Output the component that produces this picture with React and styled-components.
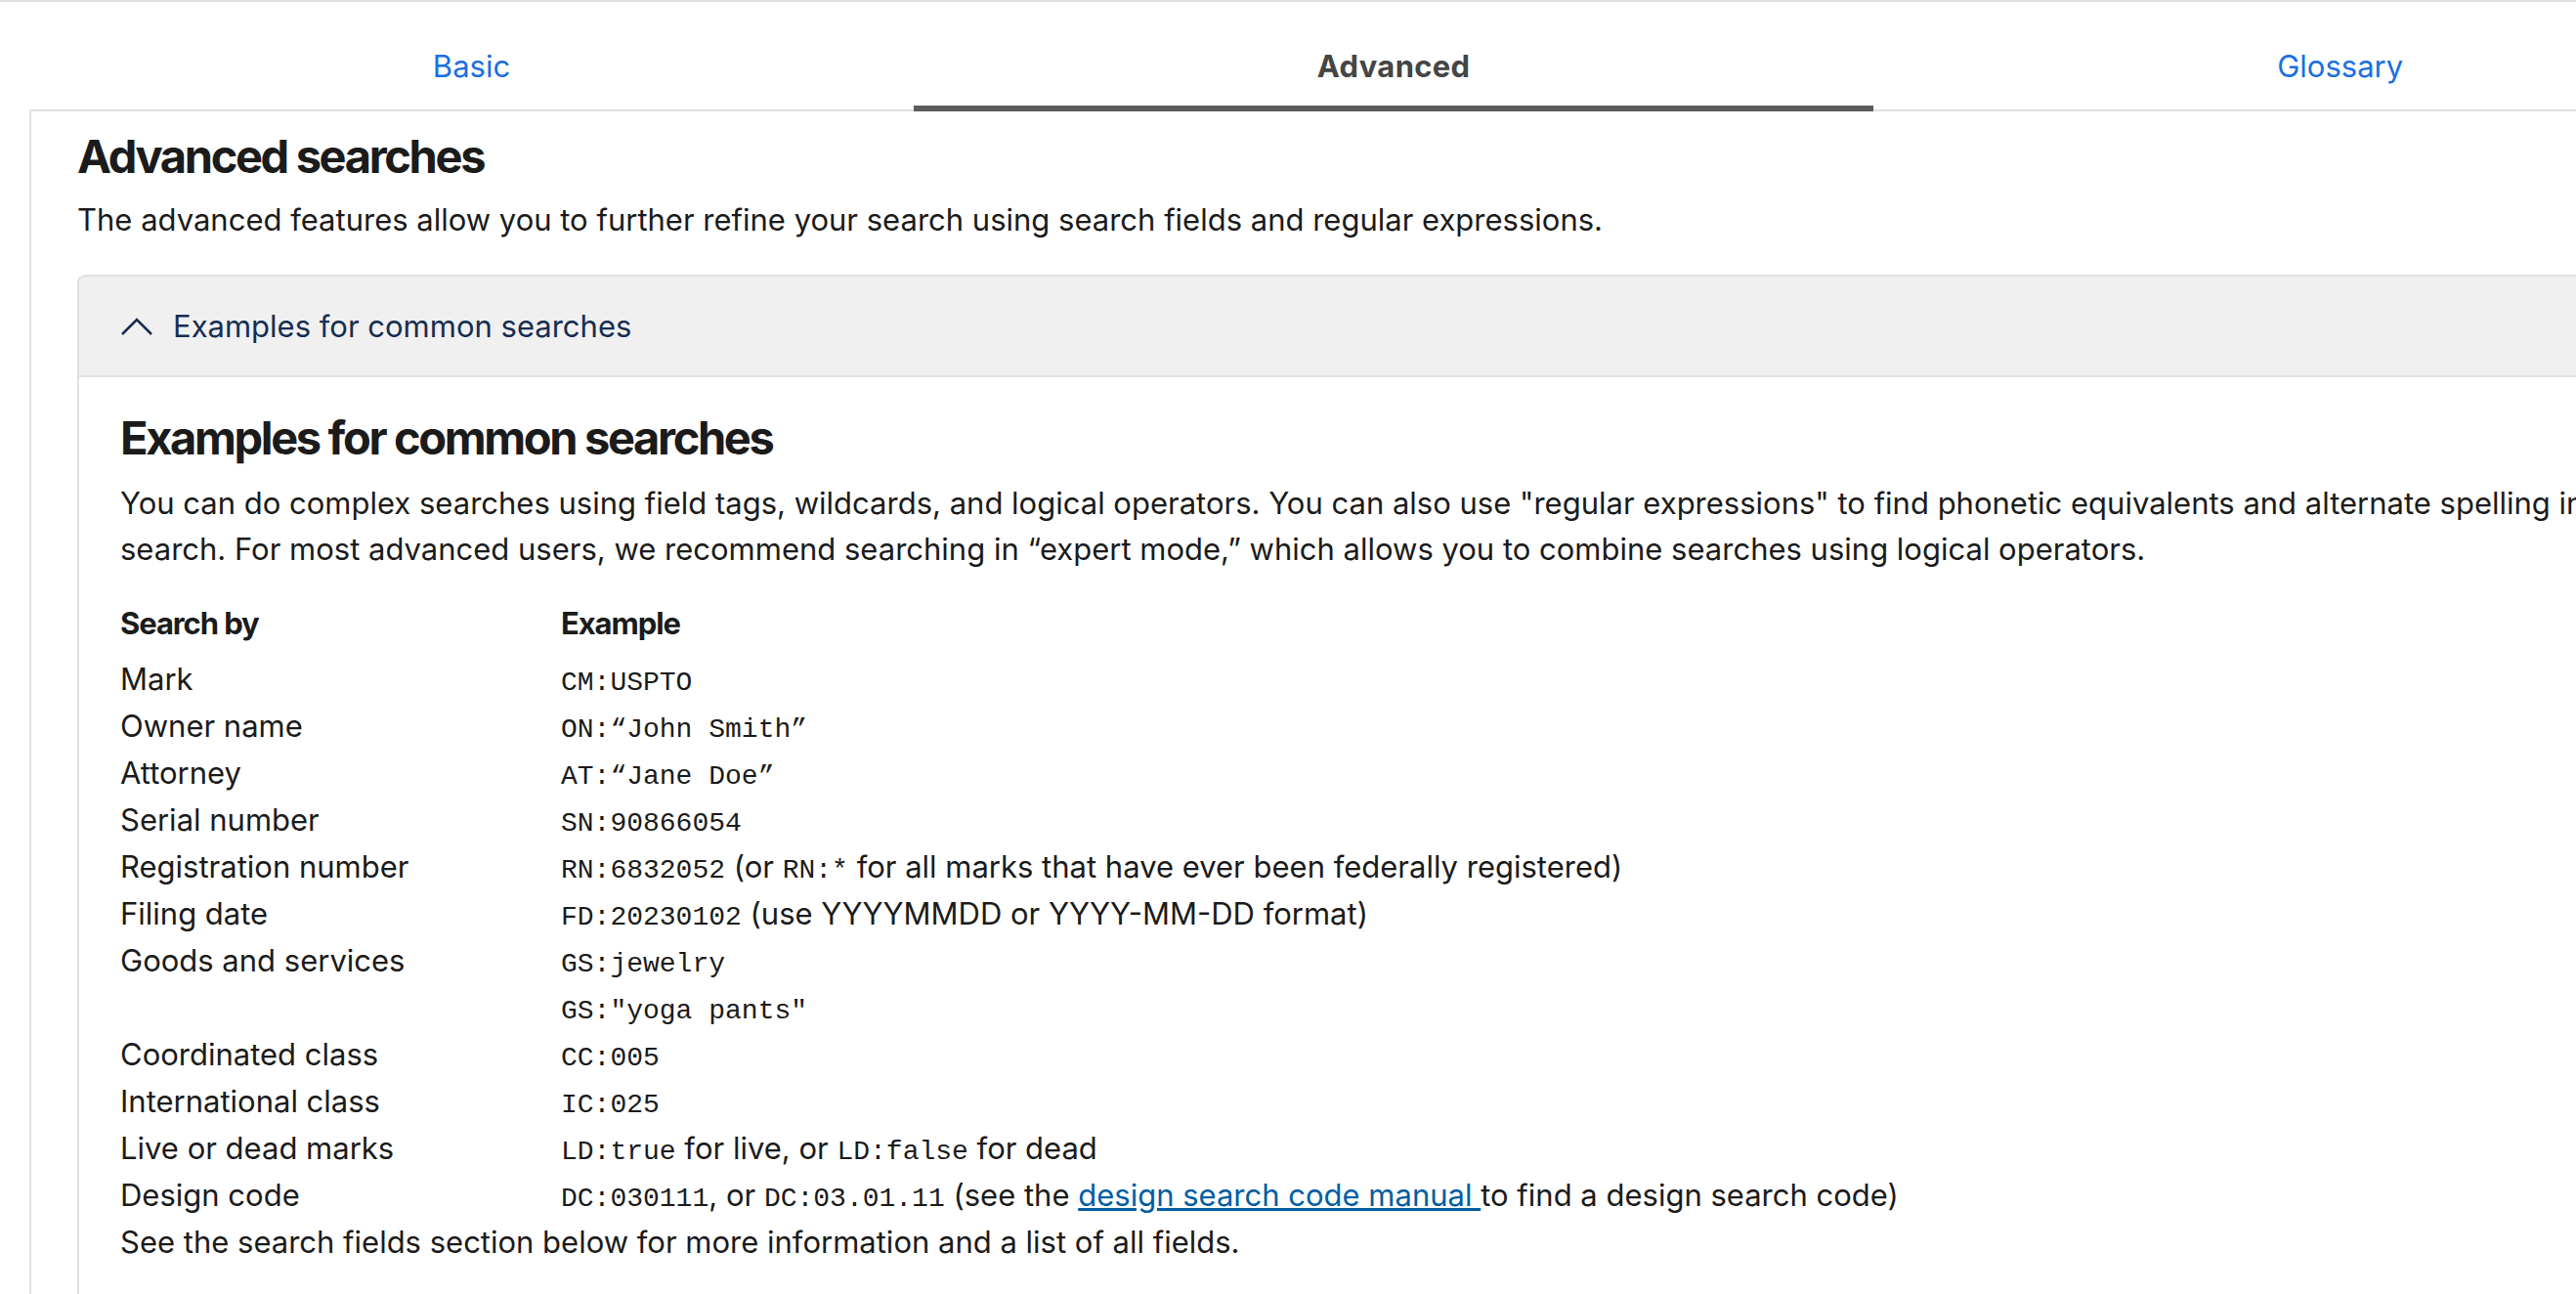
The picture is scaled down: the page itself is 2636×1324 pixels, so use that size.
import React from 'react';
import styled, { createGlobalStyle } from 'styled-components';

//------------Styles-------------

const GlobalStyle = createGlobalStyle`
  html, body {
    margin: 0;
    padding: 0;
    overflow: hidden;
    background: #ffffff;
  }
  body {
    font-family: Inter, 'Noto Sans', 'Liberation Sans', sans-serif;
    color: #1b1b1b;
  }
`;

const Page = styled.div`
  width: 2872px;
  min-height: 1324px;
  border-top: 2px solid #dfe1e2;
  padding-left: 30px;
  box-sizing: border-box;
`;

const TabList = styled.div`
  display: flex;
  border-bottom: 2px solid #dfe1e2;
`;

const Tab = styled.div`
  flex: 1 1 auto;
  box-sizing: border-box;
  height: 112px;
  margin-bottom: -2px;
  padding-top: 24px;
  display: flex;
  align-items: center;
  justify-content: center;
  font-size: 31px;
  font-weight: ${p => (p.$active ? 700 : 400)};
  letter-spacing: ${p => (p.$active ? '0.01em' : '0')};
  color: ${p => (p.$active ? '#454545' : '#1a6fe0')};
  border-bottom: 6px solid ${p => (p.$active ? '#5c5c5c' : 'transparent')};
  cursor: pointer;
`;

const Panel = styled.div`
  border-left: 2px solid #dfe1e2;
  padding: 17px 0 0 47px;
  min-height: 1210px;
`;

const PageTitle = styled.h1`
  margin: 0;
  font-size: 47px;
  line-height: 58px;
  font-weight: 700;
  letter-spacing: -0.05em;
`;

const Lead = styled.p`
  margin: 12px 0 0;
  font-size: 31px;
  line-height: 48px;
`;

const Accordion = styled.section`
  margin-top: 32px;
  border-left: 2px solid #dfe1e2;
  border-top-left-radius: 8px;
`;

const AccordionHeader = styled.button`
  width: 100%;
  box-sizing: border-box;
  height: 105px;
  display: flex;
  align-items: center;
  gap: 20px;
  padding: 0 0 0 42px;
  background: #f0f0f0;
  border: none;
  border-top: 2px solid #dfe1e2;
  border-bottom: 2px solid #dfe1e2;
  border-top-left-radius: 8px;
  color: #162e51;
  font-family: inherit;
  font-size: 31px;
  text-align: left;
  cursor: pointer;
`;

const AccordionBody = styled.div`
  padding: 33px 0 40px 42px;
`;

const SectionTitle = styled.h2`
  margin: 0;
  font-size: 47px;
  line-height: 58px;
  font-weight: 700;
  letter-spacing: -0.05em;
`;

const Body = styled.p`
  margin: 14px 0 0;
  font-size: 31px;
  line-height: 47px;
  white-space: nowrap;
`;

const ExampleTable = styled.table`
  margin-top: 29px;
  border-collapse: collapse;
  font-size: 31px;
  line-height: 48px;
`;

const HeadCell = styled.th`
  text-align: left;
  font-weight: 700;
  letter-spacing: -0.035em;
  padding: 0 0 9px;
  width: 451px;
  &:last-child {
    width: auto;
  }
`;

const Cell = styled.td`
  padding: 0;
  height: 48px;
  vertical-align: top;
  white-space: nowrap;
`;

const Code = styled.code`
  font-family: 'Liberation Mono', 'DejaVu Sans Mono', monospace;
  font-size: 28px;
  line-height: 1;
`;

const Link = styled.a`
  color: #005ea2;
  text-decoration: underline;
`;

const Note = styled.p`
  margin: 0;
  font-size: 31px;
  line-height: 48px;
`;

//----------------------End Styles--------------------

const tabs = [
  { label: 'Basic', active: false },
  { label: 'Advanced', active: true },
  { label: 'Glossary', active: false }
];

const rows = [
  { field: 'Mark', example: <Code>CM:USPTO</Code> },
  { field: 'Owner name', example: <Code>ON:“John Smith”</Code> },
  { field: 'Attorney', example: <Code>AT:“Jane Doe”</Code> },
  { field: 'Serial number', example: <Code>SN:90866054</Code> },
  {
    field: 'Registration number',
    example: (
      <>
        <Code>RN:6832052</Code> (or <Code>RN:*</Code> for all marks that have ever been federally registered)
      </>
    )
  },
  {
    field: 'Filing date',
    example: (
      <>
        <Code>FD:20230102</Code> (use YYYYMMDD or YYYY-MM-DD format)
      </>
    )
  },
  { field: 'Goods and services', example: <Code>GS:jewelry</Code> },
  { field: '', example: <Code>GS:"yoga pants"</Code> },
  { field: 'Coordinated class', example: <Code>CC:005</Code> },
  { field: 'International class', example: <Code>IC:025</Code> },
  {
    field: 'Live or dead marks',
    example: (
      <>
        <Code>LD:true</Code> for live, or <Code>LD:false</Code> for dead
      </>
    )
  },
  {
    field: 'Design code',
    example: (
      <>
        <Code>DC:030111</Code>, or <Code>DC:03.01.11</Code> (see the{' '}
        <Link href="#">design search code manual </Link>to find a design search code)
      </>
    )
  }
];

function ChevronUp() {
  return (
    <svg width="34" height="20" viewBox="0 0 34 20" fill="none">
      <polyline points="2,18 17,3 32,18" stroke="#162e51" strokeWidth="2.6" />
    </svg>
  );
}

export default function App() {
  return (
    <Page>
      <GlobalStyle />
      <TabList>
        {tabs.map(t => (
          <Tab key={t.label} $active={t.active}>
            {t.label}
          </Tab>
        ))}
      </TabList>
      <Panel>
        <PageTitle>Advanced searches</PageTitle>
        <Lead>
          The advanced features allow you to further refine your search using search fields and regular
          expressions.
        </Lead>
        <Accordion>
          <AccordionHeader>
            <ChevronUp />
            <span>Examples for common searches</span>
          </AccordionHeader>
          <AccordionBody>
            <SectionTitle>Examples for common searches</SectionTitle>
            <Body>
              You can do complex searches using field tags, wildcards, and logical operators. You can also use
              "regular expressions" to find phonetic equivalents and alternate spelling in your
              <br />
              search. For most advanced users, we recommend searching in “expert mode,” which allows you to
              combine searches using logical operators.
            </Body>
            <ExampleTable>
              <thead>
                <tr>
                  <HeadCell>Search by</HeadCell>
                  <HeadCell>Example</HeadCell>
                </tr>
              </thead>
              <tbody>
                {rows.map((r, i) => (
                  <tr key={i}>
                    <Cell>{r.field}</Cell>
                    <Cell>{r.example}</Cell>
                  </tr>
                ))}
              </tbody>
            </ExampleTable>
            <Note>See the search fields section below for more information and a list of all fields.</Note>
          </AccordionBody>
        </Accordion>
      </Panel>
    </Page>
  );
}
